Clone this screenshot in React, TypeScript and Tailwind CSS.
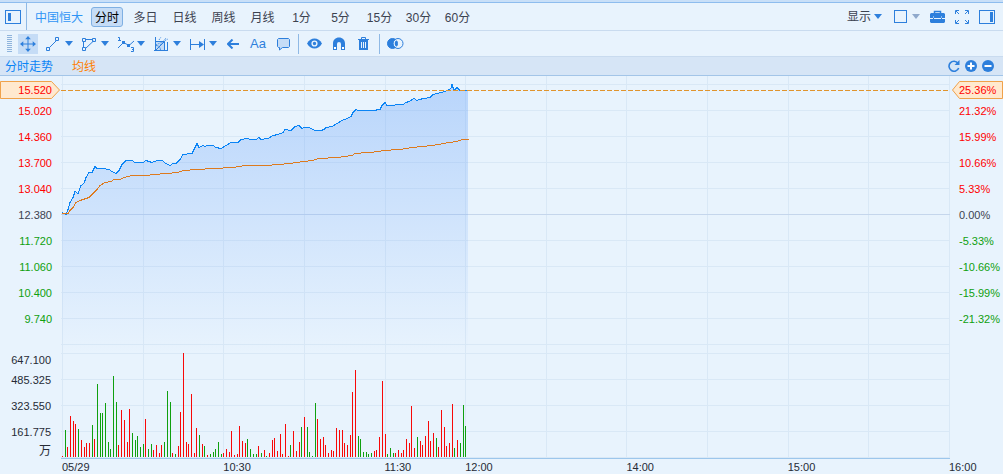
import { ReactNode } from "react";
import clsx from "clsx";

const periods = ["多日", "日线", "周线", "月线", "1分", "5分", "15分", "30分", "60分"];

const prices = [
  { price: "15.020", change: "21.32%" },
  { price: "14.360", change: "15.99%" },
  { price: "13.700", change: "10.66%" },
  { price: "13.040", change: "5.33%" },
  { price: "12.380", change: "0.00%" },
  { price: "11.720", change: "-5.33%" },
  { price: "11.060", change: "-10.66%" },
  { price: "10.400", change: "-15.99%" },
  { price: "9.740", change: "-21.32%" },
];

const times = ["05/29", "", "10:30", "", "11:30", "12:00", "", "14:00", "", "15:00", ""];

const pricePoints =
  "1,136 3,137 5,138 7,133 9,126 12,121 14,115 17,117 20,109 23,107 25,101 28,96 31,96 34,90 36,92 42,92 48,93 51,95 55,97 58,94 61,88 65,84 71,84 74,86 82,86 85,84 91,86 96,84 101,84 105,87 109,89 112,87 115,87 119,83 122,78 131,77 134,71 136,67 138,71 142,69 144,70 146,69 152,69 155,71 160,72 165,69 170,66 177,66 180,63 187,62 189,63 195,63 198,61 200,63 207,62 212,59 217,58 222,56 224,53 230,54 234,50 238,49 241,52 243,51 248,51 254,54 260,54 263,53 265,51 271,50 276,47 281,44 286,42 290,40 292,36 295,33 297,34 312,34 319,33 321,29 324,26 326,29 342,28 345,26 348,25 353,22 356,24 358,23 363,22 369,21 372,18 376,17 380,16 384,15 388,13 390,12 391,8 393,14 396,11 399,14 407,14";

const averagePoints =
  "1,137 7,137 9,134 12,131 15,126 19,124 28,121 32,117 36,113 39,109 44,106 50,105 53,103 59,103 63,101 71,99 84,99 94,98 105,97 117,96 122,94 136,93 152,92 172,91 184,89 204,89 219,88 236,86 242,85 252,84 257,82 277,81 291,79 294,77 319,75 321,74 339,73 351,71 362,70 378,68 382,67 396,65 401,63 408,63";

// One entry per minute, negative values are minutes that closed lower
const volumes = [
  1, -27, 10, 41, 36, 33, -28, 17, 10, 14, 14, -32, 18, -73, -44, -44, -54, -15, -8, -81,
  -55, 12, 47, 37, 15, 48, -24, -17, -21, -10, -13, 38, -8, -13, 7, 12, 4, 12, -15, -66,
  -55, 4, -3, 11, 45, 104, 15, 13, 63, 4, 29, -22, 13, -11, 2, -3, -5, -8, -15, -3,
  4, 8, 5, 26, 2, 3, 31, 16, 14, -18, -8, -3, -3, 11, -4, 7, -1, 4, 17, 19,
  6, 23, 3, 33, 1, -12, 26, 6, 15, -30, 40, -30, -5, -1, -54, 38, 18, 20, 12, 4,
  7, 6, 29, 27, 27, 14, 12, 22, 65, 87, -21, -18, -5, -5, -3, -4, 6, 7, 20, 76,
  23, -3, -9, -4, 4, 7, 4, 7, 18, 14, 51, 9, -20, 16, 12, 21, 36, 16, 24, -19,
  10, 47, 30, 11, 14, 53, -9, 17, -14, -52, -31,
];

const gridRows = [8, 34, 60, 86, 112, 164, 190, 216, 242, 268, 277, 303, 329, 355, 381];
const gridCols = Array.from({ length: 12 }, (_, i) => 1 + Math.round(i * 80.64));

function Caret({ muted = false }: { muted?: boolean }) {
  return (
    <svg width="8" height="5" viewBox="0 0 8 5" className={muted ? "fill-[#8fa9cc]" : "fill-[#2d7fdc]"}>
      <path d="M0 0h8L4 5z" />
    </svg>
  );
}

function PanelIcon({ right = false }: { right?: boolean }) {
  return (
    <svg width="16" height="14" viewBox="0 0 16 14" shapeRendering="crispEdges">
      <path d="M.5.5h15v13H.5z" fill="none" stroke="#2d7fdc" />
      <path d={right ? "M11 2h3v10h-3z" : "M3 3h3v8H3z"} fill="#2d7fdc" />
    </svg>
  );
}

function Tool({
  label,
  children,
  className,
}: {
  label: string;
  children: ReactNode;
  className?: string;
}) {
  return (
    <button aria-label={label} className={clsx("flex h-5 shrink-0 items-center", className)}>
      {children}
    </button>
  );
}

function DrawTool({ label, children }: { label: string; children: ReactNode }) {
  return (
    <Tool label={label} className="w-9 gap-0.5">
      <svg width="17" height="16" viewBox="0 0 17 16" fill="none" stroke="#2d7fdc">
        {children}
      </svg>
      <Caret />
    </Tool>
  );
}

function PeriodBar() {
  return (
    <div className="flex h-7 items-center border-b border-[#c9dbef]">
      <div className="flex h-full w-[27px] shrink-0 items-center border-r border-[#8fb9e5] pl-[5px]">
        <button aria-label="左侧栏">
          <PanelIcon />
        </button>
      </div>
      <a href="#stock" className="ml-2 shrink-0 pt-0.5 text-[#2f95f5]">
        中国恒大
      </a>
      <button className="mr-[3px] ml-2 h-5 w-8 shrink-0 rounded-[3px] border border-[#7fb0e3] bg-[#c5dcf6] pt-0.5 text-black">
        分时
      </button>
      {periods.map((period) => (
        <button key={period} className="h-5 w-[39px] shrink-0 pt-0.5 text-[#3c4250]">
          {period}
        </button>
      ))}
      <div className="ml-auto flex shrink-0 items-center pr-2">
        <button className="flex items-center gap-[3px] text-[#3c4250]">
          显示
          <Caret />
        </button>
        <button aria-label="窗口布局" className="ml-3 flex items-center gap-1">
          <svg width="14" height="14" viewBox="0 0 14 14" shapeRendering="crispEdges">
            <path d="M.5.5h12v12H.5z" fill="none" stroke="#2d7fdc" />
          </svg>
          <Caret muted />
        </button>
        <button aria-label="工具箱" className="ml-[10px]">
          <svg width="15" height="14" viewBox="0 0 15 14" fill="#2d7fdc">
            <path d="M4.500 3V1.500h6V3" fill="none" stroke="#2d7fdc" strokeWidth="1.500" />
            <path d="M1 3h13l1 1v4H0V4zM0 9h15v3l-1 1H1l-1-1z" />
            <path d="M3 6.500h1v1H3zM11 6.500h1v1h-1z" fill="#e8f3fd" />
            <path d="M3 8h1v2H3zM11 8h1v2h-1z" />
          </svg>
        </button>
        <button aria-label="全屏" className="ml-[10px]">
          <svg width="14" height="14" viewBox="0 0 14 14" fill="none" stroke="#2d7fdc">
            <path d="M.5 4V.5H4M1 1l3 3M10 .5h3.500V4M13 1l-3 3M.5 10v3.500H4M1 13l3-3M10 13.500h3.500V10M13 13l-3-3" />
          </svg>
        </button>
        <button aria-label="右侧栏" className="ml-[10px]">
          <PanelIcon right />
        </button>
      </div>
    </div>
  );
}

function DrawingBar() {
  return (
    <div className="flex h-[26px] items-center border-b border-[#c9dbef]">
      <svg width="5" height="17" viewBox="0 0 5 17" className="ml-[7px] shrink-0" shapeRendering="crispEdges">
        <path d="M0 .5h5M0 2.500h5M0 4.500h5M0 6.500h5M0 8.500h5M0 10.500h5M0 12.500h5M0 14.500h5M0 16.500h5" stroke="#8fb4dc" />
      </svg>
      <Tool label="移动" className="mr-2 ml-[6px] w-5 justify-center bg-[#c5dcf6]">
        <svg width="16" height="16" viewBox="0 0 17 17" fill="#2d7fdc">
          <path d="M8 2h1v13H8zM2 8h13v1H2z" />
          <path d="M8.500 0 11.500 3.500h-6zM8.500 17l3-3.500h-6zM0 8.500l3.500-3v6zM17 8.500l-3.500-3v6z" />
        </svg>
      </Tool>
      <DrawTool label="线段">
        <path d="M3.500 11.500 10 5M.5 11.500h3v3h-3zM9.500 1.500h3v3h-3z" />
      </DrawTool>
      <DrawTool label="多边形">
        <path d="M3.500 3.500h7M1.500 5.500v6M3.500 12.500 11.500 5M.5 2.500h3v3h-3zM10.500 2.500h3v3h-3zM.5 11.500h3v3h-3z" />
      </DrawTool>
      <DrawTool label="波浪">
        <path d="m0 12 5.500-5.500L11 9.500l5-4.500" />
        <path d="M4 5h3v3H4zM9 8h3v3H9z" fill="#2d7fdc" stroke="none" />
        <path d="M0 1.500h1.500V5M0 4.500h3M13 11.500h2.500v4H13M14 13.500h2" />
      </DrawTool>
      <DrawTool label="江恩">
        <path d="M2 6h9v8H2z" fill="#c5dcf6" stroke="none" />
        <path d="M1.500 1v13.500M13.500 6v8.500M0 14.500h14M1.500 5.500h9v9M1.500 14.500l9-9" />
        <path d="M1.500 9.500q5 0 5 5" strokeDasharray="2 1" />
        <path d="m4 12 8-10M2 9l12-6M5 4l2-3" strokeDasharray="1 1" />
      </DrawTool>
      <DrawTool label="测量">
        <path d="M.5 3v11M14.500 3v11M1 8.500h10" />
        <path d="m9 5 5 3.500L9 12z" fill="#2d7fdc" stroke="none" />
      </DrawTool>
      <Tool label="箭头" className="ml-px w-[23px]">
        <svg width="12" height="10" viewBox="0 0 12 10" fill="none" stroke="#2d7fdc" strokeWidth="2">
          <path d="M12 5H1M5.500.5 1 5l4.500 4.500" />
        </svg>
      </Tool>
      <button className="w-[27px] shrink-0 text-left text-[13px] font-medium text-[#2d7fdc]">Aa</button>
      <Tool label="标注" className="w-[21px]">
        <svg width="13" height="14" viewBox="0 0 13 14" fill="#c5dcf6" stroke="#2d7fdc">
          <path d="M1.500 1.500h10l1 1v7l-1 1h-6l-3 2.500v-2.500h-1l-1-1v-7z" />
        </svg>
      </Tool>
      <div className="h-5 w-px shrink-0 bg-[#8fb9e5]" />
      <Tool label="显示画线" className="ml-2 w-[26px]">
        <svg width="15" height="11" viewBox="0 0 15 11">
          <path d="M0 5.500C2 2 4.500.5 7.500.5S13 2 15 5.500C13 9 10.500 10.500 7.500 10.500S2 9 0 5.500z" fill="#2d7fdc" />
          <circle cx="7.500" cy="5.500" r="2.400" fill="#2d7fdc" stroke="#e8f3fd" strokeWidth="1.400" />
        </svg>
      </Tool>
      <Tool label="磁吸" className="w-[25px]">
        <svg width="12" height="13" viewBox="0 0 12 13">
          <path d="M0 13V6.500C0 3 2.500.5 6 .5s6 2.500 6 6V13H8V7q0-2-2-2T4 7v6z" fill="#2d7fdc" />
          <path d="M1 10h2v2H1zM9 10h2v2H9z" fill="#fff" />
        </svg>
      </Tool>
      <Tool label="删除" className="w-[21px]">
        <svg width="11" height="13" viewBox="0 0 11 13">
          <path d="M3.500 2V.5h4V2M0 2.500h11" fill="none" stroke="#2d7fdc" />
          <path d="M1 3h9v10H1z" fill="#2d7fdc" />
          <path d="M3.500 5v6M5.500 5v6M7.500 5v6" stroke="#e8f3fd" />
        </svg>
      </Tool>
      <div className="h-5 w-px shrink-0 bg-[#8fb9e5]" />
      <Tool label="对比" className="ml-[7px]">
        <svg width="17" height="11" viewBox="0 0 17 11" stroke="#2d7fdc">
          <circle cx="5.500" cy="5.500" r="5" fill="#2d7fdc" />
          <circle cx="11" cy="5.500" r="4" fill="none" stroke="#e8f3fd" strokeWidth="1.500" />
          <circle cx="11" cy="5.500" r="5" fill="none" />
        </svg>
      </Tool>
    </div>
  );
}

function IndicatorBar() {
  return (
    <div className="flex h-[19px] items-center border-b border-[#a3c5e8] bg-[#d6e5f6] pr-[9px] pl-[5px]">
      <span className="pt-0.5 text-[#0a84f5]">分时走势</span>
      <span className="ml-[19px] pt-0.5 text-[#ff7f00]">均线</span>
      <div className="ml-auto flex gap-[5px]">
        <button aria-label="刷新">
          <svg width="12" height="12" viewBox="0 0 12 12">
            <path d="M10 3.200A5 5 0 1 0 10.700 8" fill="none" stroke="#2d7fdc" strokeWidth="1.600" />
            <path d="M11.500 0v5h-5z" fill="#2d7fdc" />
          </svg>
        </button>
        <button aria-label="放大">
          <svg width="12" height="12" viewBox="0 0 12 12">
            <circle cx="6" cy="6" r="6" fill="#2d7fdc" />
            <path d="M2.500 6h7M6 2.500v7" stroke="#fff" strokeWidth="2" />
          </svg>
        </button>
        <button aria-label="缩小">
          <svg width="12" height="12" viewBox="0 0 12 12">
            <circle cx="6" cy="6" r="6" fill="#2d7fdc" />
            <path d="M2.500 6h7" stroke="#fff" strokeWidth="2" />
          </svg>
        </button>
      </div>
    </div>
  );
}

function axisColor(index: number) {
  if (index < 4) return "text-[#ff0000]";
  if (index === 4) return "text-[#3c4250]";
  return "text-[#0fa00f]";
}

function PriceAxis() {
  return (
    <div className="w-[61px] shrink-0 pt-[5px] text-right text-[11px]">
      <div className="relative -mb-px h-[18px] pr-[9px] leading-[18px] text-[#ff0000]">
        <svg width="61" height="18" viewBox="0 0 61 18" className="absolute inset-0">
          <path d="M.5.5h51l8 8.500-8 8.500H.5z" fill="#ffe9cf" stroke="#f0a24a" />
        </svg>
        <span className="relative">15.520</span>
      </div>
      {prices.map(({ price }, i) => (
        <div key={price} className={clsx("pr-[9px] leading-[26px]", axisColor(i))}>
          {price}
        </div>
      ))}
      <div className="mt-[21px] pr-[10px] text-[#262b36]">
        <div className="leading-[14px]">647.100</div>
        <div className="leading-[26px]">485.325</div>
        <div className="leading-[26px]">323.550</div>
        <div className="leading-[26px]">161.775</div>
        <div className="text-xs leading-[13px]">万</div>
      </div>
    </div>
  );
}

function ChangeAxis() {
  return (
    <div className="w-[53px] shrink-0 pt-[5px] text-[11px]">
      <div className="relative -mb-px h-[18px] pl-[9px] leading-[18px] text-[#ff0000]">
        <svg width="53" height="18" viewBox="0 0 53 18" className="absolute inset-0">
          <path d="M52.500.5H9.500L2.500 9l7 8.500h43z" fill="#ffe9cf" stroke="#f0a24a" />
        </svg>
        <span className="relative">25.36%</span>
      </div>
      {prices.map(({ change }, i) => (
        <div key={change} className={clsx("pl-[9px] leading-[26px]", axisColor(i))}>
          {change}
        </div>
      ))}
    </div>
  );
}

function Plot() {
  return (
    <svg viewBox="0 0 889 383" preserveAspectRatio="none" className="h-[383px] min-w-0 flex-1" fill="none">
      <defs>
        <linearGradient id="area" gradientUnits="userSpaceOnUse" x1="0" y1="8" x2="0" y2="277">
          <stop offset="0" stopColor="#64a0f8" stopOpacity=".36" />
          <stop offset="1" stopColor="#64a0f8" stopOpacity="0" />
        </linearGradient>
      </defs>
      <g shapeRendering="crispEdges">
        {gridRows.map((y) => (
          <rect key={y} x="0" y={y} width="889" height="1" fill="#d9e8f6" />
        ))}
        {gridCols.map((x) => (
          <rect key={x} x={x} y="0" width="1" height="382" fill="#d9e8f6" />
        ))}
        <rect x="0" y="138" width="889" height="1" fill="#c5d6ec" />
        <rect x="0" y="382" width="889" height="1" fill="#9cc6ec" />
      </g>
      <polygon points={`1,277 ${pricePoints} 407,277`} fill="url(#area)" />
      <g shapeRendering="crispEdges">
        <polyline points={pricePoints} stroke="#0a84f5" transform="translate(0 .5)" />
        <polyline points={averagePoints} stroke="#dd7a1e" transform="translate(0 .5)" />
        <path d="M0 14.500h889" stroke="#e0942d" strokeDasharray="5 2" />
        {volumes.map((volume, i) => (
          <rect
            key={i}
            x={1 + Math.round(i * 2.688)}
            y={381 - Math.abs(volume)}
            width="1"
            height={Math.abs(volume)}
            fill={volume > 0 ? "#f80808" : "#0fa00f"}
          />
        ))}
      </g>
    </svg>
  );
}

function TimeAxis() {
  return (
    <div className="flex pl-[62px] text-[11px] leading-[16px] text-[#262b36]">
      <div className="grid flex-1 grid-cols-11">
        {times.map((time, i) => (
          <span key={i}>{time}</span>
        ))}
      </div>
      <span className="w-[54px] shrink-0">16:00</span>
    </div>
  );
}

export default function App() {
  return (
    <div className="min-h-screen overflow-hidden bg-[#e8f3fd] font-['Liberation_Sans','Noto_Sans_CJK_SC',sans-serif] text-xs">
      <div className="h-[3px] border-b border-[#8dbcee] bg-[#c8dff8]" />
      <PeriodBar />
      <DrawingBar />
      <IndicatorBar />
      <main className="flex">
        <PriceAxis />
        <Plot />
        <ChangeAxis />
      </main>
      <TimeAxis />
    </div>
  );
}
